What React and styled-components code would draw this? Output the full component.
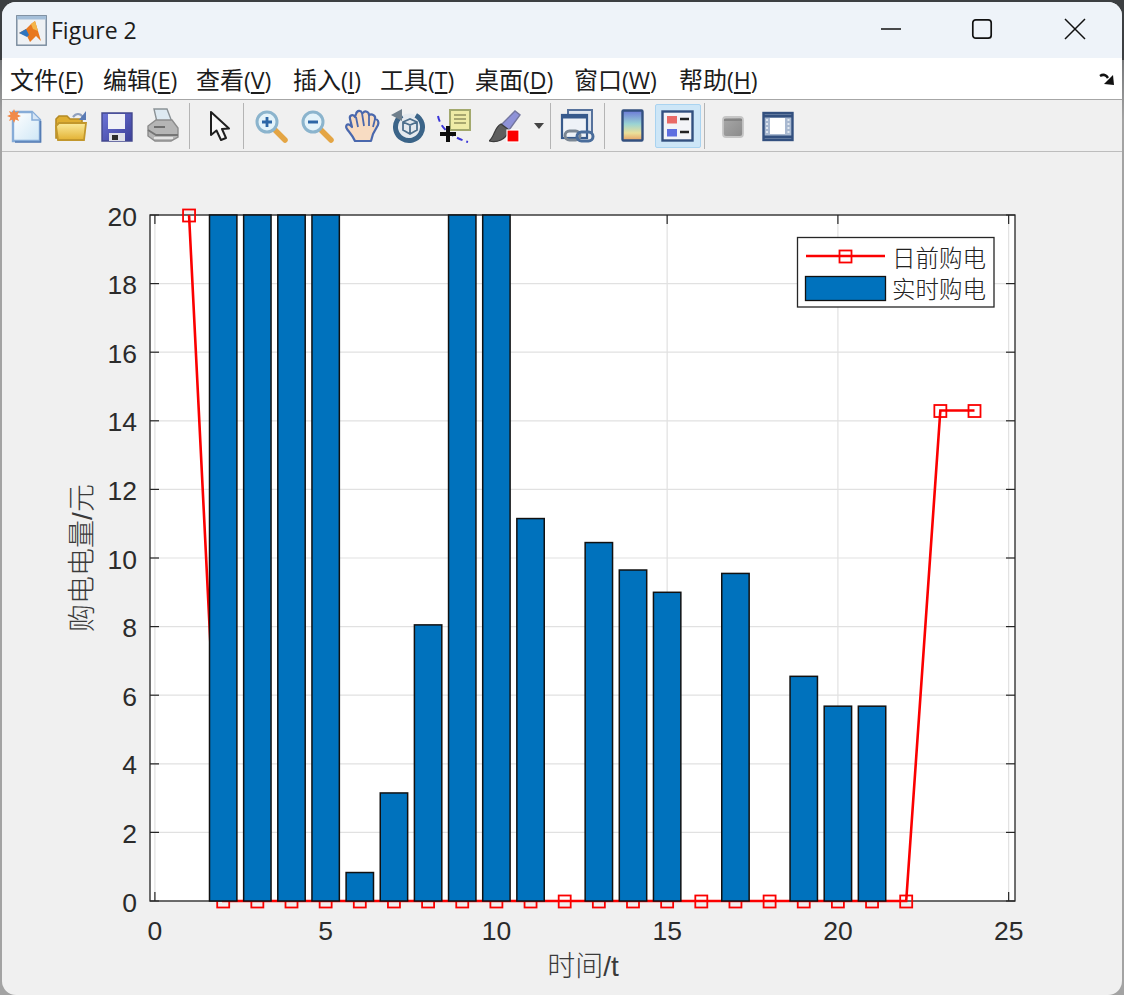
import React from "react";
import styled, { createGlobalStyle } from "styled-components";

const Global = createGlobalStyle`
  html, body { margin: 0; padding: 0; background: #8e8e8e; }
  body { width: 1124px; height: 995px; overflow: hidden; font-family: "Noto Sans CJK SC", "Liberation Sans", sans-serif; }
`;

const Desktop = styled.div`
  width: 1124px;
  height: 995px;
  padding: 2px 2px 0;
  box-sizing: border-box;
  background: linear-gradient(#3c3f42 0, #3c3f42 60px, #77797b 60px, #a3a3a3 120px, #a3a3a3 100%);
`;
const Window = styled.div`
  width: 1120px;
  height: 993px;
  display: flex;
  flex-direction: column;
  background: #f0f0f0;
  border-radius: 14px;
  overflow: hidden;
`;
const TitleBar = styled.div`
  height: 56px;
  display: flex;
  align-items: center;
  padding-left: 14px;
  background: #eef3f9;
  flex: none;
`;
const AppIcon = styled.svg`
  width: 31px;
  height: 31px;
  flex: none;
`;
const Title = styled.span`
  margin-left: 4px;
  font: 400 23px "Open Sans", "Noto Sans", sans-serif;
  color: #1b1b1b;
`;
const Controls = styled.div`
  margin-left: auto;
  display: flex;
  height: 100%;
  align-items: center;
  margin-top: -3px;
`;
const Control = styled.div`
  width: ${(p) => p.$w}px;
  display: flex;
  justify-content: center;
  align-items: center;
`;
const MenuBar = styled.div`
  height: 41px;
  flex: none;
  display: flex;
  align-items: center;
  padding-left: 8px;
  background: #fff;
  border-bottom: 1px solid #a6a6a6;
`;
const MenuItem = styled.span`
  font: 400 24px "Noto Sans CJK SC", sans-serif;
  color: #1c1c1c;
  white-space: nowrap;
  width: ${(p) => p.$w}px;
`;
const MenuKey = styled.span`
  font: 400 23px "Open Sans", "Noto Sans", sans-serif;
  & u { text-underline-offset: 3px; text-decoration-thickness: 1.5px; }
`;
const MenuArrow = styled.svg`
  margin-left: auto;
  margin-right: 7px;
  width: 16px;
  height: 14px;
`;
const Toolbar = styled.div`
  height: 51px;
  flex: none;
  display: flex;
  align-items: center;
  background: #f0f0f0;
  border-bottom: 1px solid #bdbdbd;
`;
const ToolButton = styled.div`
  width: ${(p) => p.$w || 46}px;
  height: 44px;
  margin-left: ${(p) => p.$ml || 0}px;
  flex: none;
  box-sizing: border-box;
  display: flex;
  align-items: center;
  justify-content: center;
  border-radius: 2px;
  border: 1px solid ${(p) => (p.$on ? "#a9d3f0" : "transparent")};
  background: ${(p) => (p.$on ? "#cde6f7" : "transparent")};
  & > svg { width: 36px; height: 36px; flex: none; }
  & > svg.small { width: 14px; height: 10px; }
`;
const Sep = styled.div`
  width: 1px;
  height: 46px;
  flex: none;
  background: #b4b4b4;
  margin-left: ${(p) => p.$l}px;
  margin-right: ${(p) => p.$r}px;
`;
const ChartArea = styled.div`
  flex: 1;
  min-height: 0;
`;
const ChartSvg = styled.svg`
  display: block;
  width: 1120px;
  height: 841px;
`;
const Tick = styled.text`
  font: 400 26.5px "Liberation Sans", Arial, sans-serif;
  fill: #2b2b2b;
`;
const AxisLabel = styled.text`
  font: 300 28px "Liberation Sans", "Noto Sans CJK SC", sans-serif;
  fill: #3a3a3a;
`;
const LegendText = styled.text`
  font: 300 23.5px "Noto Sans CJK SC", sans-serif;
  fill: #222;
`;

const X = (v) => 154.9 + v * 34.15;
const Y = (v) => 901 - v * 34.3;
const L = 150, R = 1015, T = 215, B = 901;

const bars = [0, 20, 20, 20, 20, 0.83, 3.15, 8.05, 20, 20, 11.15, 0, 10.45, 9.65, 9, 0, 9.55, 0, 6.55, 5.68, 5.68, 0, 0, 0];
const line = [20, ...Array(21).fill(0), 14.3, 14.3];

const Plot = () => {
  const xt = [0, 5, 10, 15, 20, 25];
  const yt = [0, 2, 4, 6, 8, 10, 12, 14, 16, 18, 20];
  const pts = line.map((v, i) => `${X(i + 1)},${Y(v)}`).join(" ");
  return (
    <ChartSvg viewBox="2 152 1120 841">
      <rect x={L} y={T} width={R - L} height={B - T} fill="#fff" />
      {xt.map((v) => <line key={v} x1={X(v)} x2={X(v)} y1={T} y2={B} stroke="#e1e1e1" strokeWidth="1.2" />)}
      {yt.map((v) => <line key={v} x1={L} x2={R} y1={Y(v)} y2={Y(v)} stroke="#e1e1e1" strokeWidth="1.2" />)}
      {xt.map((v) => (
        <g key={v}>
          <line x1={X(v)} x2={X(v)} y1={B} y2={B - 9} stroke="#262626" strokeWidth="1.2" />
          <line x1={X(v)} x2={X(v)} y1={T} y2={T + 9} stroke="#262626" strokeWidth="1.2" />
          <Tick x={X(v)} y={940} textAnchor="middle">{v}</Tick>
        </g>
      ))}
      {yt.map((v) => (
        <g key={v}>
          <line x1={L} x2={L + 9} y1={Y(v)} y2={Y(v)} stroke="#262626" strokeWidth="1.2" />
          <line x1={R} x2={R - 9} y1={Y(v)} y2={Y(v)} stroke="#262626" strokeWidth="1.2" />
          <Tick x={137} y={Y(v) + 10.5} textAnchor="end">{v}</Tick>
        </g>
      ))}
      <rect x={L} y={T} width={R - L} height={B - T} fill="none" stroke="#262626" strokeWidth="1.3" />
      <polyline points={pts} fill="none" stroke="#fb0000" strokeWidth="2.6" />
      {line.map((v, i) => (
        <rect key={i} x={X(i + 1) - 6} y={Y(v) - 5.5} width="12" height="12" fill="none" stroke="#fb0000" strokeWidth="1.8" />
      ))}
      {bars.map((v, i) => (
        <rect key={i} x={X(i + 1) - 13.7} y={Y(v)} width="27.4" height={B - Y(v)} fill="#0072bd" stroke="#111" strokeWidth={v === 0 ? 1 : 1.5} />
      ))}
      <rect x="797.5" y="237.5" width="196.5" height="69.5" fill="#fff" stroke="#262626" strokeWidth="1.3" />
      <line x1="806" x2="885" y1="256" y2="256" stroke="#fb0000" strokeWidth="2.6" />
      <rect x="839.5" y="250.5" width="12" height="12" fill="none" stroke="#fb0000" strokeWidth="1.8" />
      <rect x="805.5" y="276.5" width="80" height="24" fill="#0072bd" stroke="#111" strokeWidth="1.3" />
      <LegendText x="892" y="267">日前购电</LegendText>
      <LegendText x="892" y="298">实时购电</LegendText>
      <AxisLabel x={583} y={976} textAnchor="middle">时间/t</AxisLabel>
      <AxisLabel transform="translate(92 558) rotate(-90)" textAnchor="middle">购电电量/元</AxisLabel>
    </ChartSvg>
  );
};

const Navy = "#33507f";
const NewIcon = () => (
  <svg viewBox="0 0 36 36">
    <defs>
      <linearGradient id="pg" x1="0" y1="0" x2="1" y2="1">
        <stop offset="0" stopColor="#ffffff" />
        <stop offset="1" stopColor="#cfe7f6" />
      </linearGradient>
    </defs>
    <path d="M6 4H25L33 12V33H6Z" fill="url(#pg)" stroke="#86acd8" strokeWidth="2.4" />
    <path d="M25 4V12H33" fill="#d7e6f5" stroke="#86acd8" strokeWidth="1.5" />
    <path d="M33.500 13V34H8" fill="none" stroke="#557cb4" strokeWidth="1.6" />
    <path d="M7 1L8.500 4.500 12 3 10.500 6.500 14 8 10.500 9.500 12 13 8.500 11.500 7 15 5.500 11.500 2 13 3.500 9.500 0 8 3.500 6.500 2 3 5.500 4.500Z" fill="#f18a4a" />
  </svg>
);
const OpenIcon = () => (
  <svg viewBox="0 0 36 36">
    <defs>
      <linearGradient id="fd" x1="0" y1="0" x2="0" y2="1">
        <stop offset="0" stopColor="#fbeb9c" />
        <stop offset="1" stopColor="#e3b233" />
      </linearGradient>
    </defs>
    <path d="M3 30V11L6 8H14L17 11H29V30Z" fill="#dfae31" stroke="#b48a25" strokeWidth="1.6" />
    <path d="M3 18L6 15H33L31 32H5Z" fill="url(#fd)" stroke="#c2972c" strokeWidth="1.8" />
    <path d="M20 9C23 5 27 5 30 9" fill="none" stroke="#8fa0bd" strokeWidth="2.200" />
    <path d="M33 3V12H26Z" fill="#5a7bb5" />
  </svg>
);
const SaveIcon = () => (
  <svg viewBox="0 0 36 36">
    <defs>
      <linearGradient id="fl" x1="0" y1="0" x2="1" y2="1">
        <stop offset="0" stopColor="#6d74d8" />
        <stop offset="1" stopColor="#3b3f98" />
      </linearGradient>
    </defs>
    <path d="M3 5H33V33H3Z" fill="url(#fl)" stroke="#43488f" strokeWidth="1.400" />
    <rect x="9" y="6" width="17" height="15" fill="#f0f1f7" />
    <rect x="10" y="25" width="16" height="8" fill="#dedfe9" />
    <rect x="13" y="27" width="6" height="5" fill="#2c2c2c" />
  </svg>
);
const PrintIcon = () => (
  <svg viewBox="0 0 36 36">
    <path d="M9 1H22L27 14H12Z" fill="#dde9f1" stroke="#8b9296" strokeWidth="1.400" />
    <path d="M3 18L11 12H27L33 20V29L26 33H10L3 28Z" fill="#b5b5b5" stroke="#8c8c8c" strokeWidth="1.400" />
    <path d="M3 22L11 27H33" fill="none" stroke="#757575" strokeWidth="1.800" />
    <path d="M9 30H28" stroke="#e4e4e4" strokeWidth="2.200" />
    <path d="M9 19H20" stroke="#6d6d6d" strokeWidth="2" />
  </svg>
);
const ArrowIcon = () => (
  <svg viewBox="0 0 36 36">
    <path d="M9 4V27L14.500 22.500 19 32 24 30 20 21 27 20.500Z" fill="#f8f8f8" stroke="#1f1f1f" strokeWidth="2" strokeLinejoin="round" />
  </svg>
);
const ZoomIcon = ({ plus }) => (
  <svg viewBox="0 0 36 36">
    <path d="M23 22L33 32" stroke="#e4a544" strokeWidth="5.500" strokeLinecap="round" />
    <circle cx="15" cy="14" r="10" fill="#e4f3fa" stroke="#8bb4cd" strokeWidth="3" />
    <path d="M10 14H20" stroke="#2c66a6" strokeWidth="2.800" />
    {plus && <path d="M15 9V19" stroke="#2c66a6" strokeWidth="2.800" />}
  </svg>
);
const HandIcon = () => (
  <svg viewBox="0 0 36 36">
    <path d="M11 33C9 28 6 25 3 21 1 18 3 15 6 17L8 19 6 11C5 7 9 6 11 9L12 6C13 2 17 2 18 5L19 5C21 2 25 4 25 7 28 5 32 8 31 11 34 11 35 14 34 17L29 26 27 33Z" fill="#f8dcc2" stroke="#4a68ad" strokeWidth="2.200" strokeLinejoin="round" />
    <path d="M12 9L14 19M18 5L20 18M25 7L25 18M31 11L29 19" fill="none" stroke="#4a68ad" strokeWidth="1.800" />
  </svg>
);
const RotateIcon = () => (
  <svg viewBox="0 0 36 36">
    <circle cx="19" cy="19" r="13.500" fill="#e4e9ee" stroke="#3b6488" strokeWidth="5" strokeDasharray="70 15" transform="rotate(-60 19 19)" />
    <path d="M1 7L12 1 12 13Z" fill="#6f7f8c" />
    <path d="M13 14L20 11 27 14V22L20 26 13 22ZM13 14L20 17 27 14M20 17V26" fill="none" stroke="#4d6f8c" strokeWidth="1.800" />
  </svg>
);
const CursorIcon = () => (
  <svg viewBox="0 0 36 36">
    <rect x="14" y="2" width="20" height="20" fill="#efeca6" stroke="#a3a96e" strokeWidth="2" />
    <path d="M18 7H30M18 11H30M18 15H30" stroke="#a9a870" strokeWidth="1.800" />
    <path d="M2 8C4 18 12 28 32 34" fill="none" stroke="#3b35d8" strokeWidth="2" strokeDasharray="6 4" />
    <path d="M12 18V34M4 26H20" stroke="#0d0d0d" strokeWidth="4" />
  </svg>
);
const BrushIcon = () => (
  <svg viewBox="0 0 36 36">
    <path d="M12 17L26 3 31 7 20 22Z" fill="#8e92d8" stroke="#73769f" strokeWidth="1.400" />
    <path d="M12 16C5 19 6 29 0 33 8 35 17 32 20 22Z" fill="#5e5e5e" stroke="#3c3c3c" strokeWidth="1.200" />
    <rect x="18" y="22" width="12" height="12" fill="#fb0000" stroke="#fff" strokeWidth="1.200" />
  </svg>
);
const DropIcon = () => (
  <svg className="small" viewBox="0 0 14 10"><path d="M2 2H12L7 8Z" fill="#444" /></svg>
);
const LinkIcon = () => (
  <svg viewBox="0 0 36 36">
    <rect x="8" y="2" width="24" height="22" fill="#dfe6ef" stroke="#56729c" strokeWidth="2" />
    <rect x="2" y="7" width="25" height="23" fill="#eef2f7" stroke="#375a8c" strokeWidth="2.200" />
    <path d="M2 9H27" stroke="#375a8c" strokeWidth="3" />
    <rect x="5" y="23" width="15" height="9" rx="4.500" fill="none" stroke="#7b8794" strokeWidth="3" />
    <rect x="17" y="24" width="16" height="9" rx="4.500" fill="none" stroke="#4a6d9b" strokeWidth="3" />
  </svg>
);
const ColorIcon = () => (
  <svg viewBox="0 0 36 36">
    <defs>
      <linearGradient id="cb" x1="0" y1="0" x2="0" y2="1">
        <stop offset="0" stopColor="#6b78d8" />
        <stop offset="0.45" stopColor="#9ad4d4" />
        <stop offset="0.75" stopColor="#ebe09a" />
        <stop offset="1" stopColor="#e6a064" />
      </linearGradient>
    </defs>
    <rect x="8.500" y="2.500" width="20" height="30" fill="url(#cb)" stroke={Navy} strokeWidth="2.400" rx="1" />
  </svg>
);
const LegendIcon = () => (
  <svg viewBox="0 0 36 36">
    <rect x="2.500" y="3.500" width="30" height="29" fill="#f3f4f7" stroke={Navy} strokeWidth="2.400" />
    <rect x="7" y="8" width="10" height="7.500" fill="#ea6a66" />
    <rect x="7" y="21" width="10" height="7.500" fill="#5f6fe0" />
    <path d="M20 11H29M20 24H29" stroke="#222" strokeWidth="2.600" />
  </svg>
);
const HideIcon = () => (
  <svg viewBox="0 0 36 36">
    <defs>
      <linearGradient id="hd" x1="0" y1="0" x2="1" y2="1">
        <stop offset="0" stopColor="#a9a9a9" />
        <stop offset="1" stopColor="#8a8a8a" />
      </linearGradient>
    </defs>
    <rect x="8" y="9" width="20" height="20" rx="3" fill="url(#hd)" stroke="#c6c6c6" strokeWidth="1.800" />
    <path d="M9 12H27" stroke="#7c7c7c" strokeWidth="1.600" />
  </svg>
);
const ShowIcon = () => (
  <svg viewBox="0 0 36 36">
    <rect x="2.500" y="5" width="29" height="27" fill="#a8b8d0" stroke={Navy} strokeWidth="2.400" />
    <rect x="9" y="10" width="15" height="16" fill="#fff" />
    <path d="M3 8H31M3 29H31" stroke={Navy} strokeWidth="3" />
    <path d="M6 11V27M27.500 11V27" stroke="#dfe6ef" strokeWidth="2" strokeDasharray="2 2" />
  </svg>
);

const menus = [
  ["文件", "F", 93], ["编辑", "E", 93], ["查看", "V", 97], ["插入", "I", 87],
  ["工具", "T", 95], ["桌面", "D", 99], ["窗口", "W", 105], ["帮助", "H", 90],
];

export default function App() {
  return (
    <>
      <Global />
      <Desktop>
        <Window>
          <TitleBar>
            <AppIcon viewBox="0 0 31 31">
              <rect x="0.800" y="0.800" width="29.400" height="29.400" fill="#eef1f4" stroke="#75889b" strokeWidth="1.400" />
              <rect x="1" y="1" width="29" height="3.500" fill="#a5bfd9" />
              <path d="M3 18L10 14 15 9 19 6 25 26 20 21 14 27 11 21Z" fill="#e8781f" />
              <path d="M3 18L10 14 13 20 11 22Z" fill="#2f76c0" />
              <path d="M15 9L19 6 22 16 17 14Z" fill="#f4b54a" />
            </AppIcon>
            <Title>Figure 2</Title>
            <Controls>
              <Control $w={90}>
                <svg width="22" height="4"><path d="M1 2H21" stroke="#111" strokeWidth="1.600" /></svg>
              </Control>
              <Control $w={92}>
                <svg width="22" height="22"><rect x="1.800" y="1.800" width="18.400" height="18.400" rx="3" fill="none" stroke="#111" strokeWidth="1.700" /></svg>
              </Control>
              <Control $w={94}>
                <svg width="22" height="22"><path d="M1 1L21 21M21 1L1 21" stroke="#111" strokeWidth="1.500" /></svg>
              </Control>
            </Controls>
          </TitleBar>
          <MenuBar>
            {menus.map(([name, key, w]) => (
              <MenuItem key={key} $w={w}>{name}<MenuKey>(<u>{key}</u>)</MenuKey></MenuItem>
            ))}
            <MenuArrow viewBox="0 0 16 14">
              <path d="M1 4C4 2 7 3 9 6" fill="none" stroke="#111" strokeWidth="2.400" />
              <path d="M14 3L15 13 5 12Z" fill="#111" />
            </MenuArrow>
          </MenuBar>
          <Toolbar>
            <ToolButton><NewIcon /></ToolButton>
            <ToolButton><OpenIcon /></ToolButton>
            <ToolButton><SaveIcon /></ToolButton>
            <ToolButton><PrintIcon /></ToolButton>
            <Sep $l={3} $r={7} />
            <ToolButton><ArrowIcon /></ToolButton>
            <Sep $l={0} $r={3} />
            <ToolButton><ZoomIcon plus /></ToolButton>
            <ToolButton><ZoomIcon /></ToolButton>
            <ToolButton><HandIcon /></ToolButton>
            <ToolButton><RotateIcon /></ToolButton>
            <ToolButton><CursorIcon /></ToolButton>
            <ToolButton $ml={7}><BrushIcon /></ToolButton>
            <ToolButton $w={17}><DropIcon /></ToolButton>
            <Sep $l={3} $r={4} />
            <ToolButton><LinkIcon /></ToolButton>
            <Sep $l={3} $r={4} />
            <ToolButton><ColorIcon /></ToolButton>
            <ToolButton $on><LegendIcon /></ToolButton>
            <Sep $l={3} $r={5} />
            <ToolButton><HideIcon /></ToolButton>
            <ToolButton><ShowIcon /></ToolButton>
          </Toolbar>
          <ChartArea><Plot /></ChartArea>
        </Window>
      </Desktop>
    </>
  );
}
